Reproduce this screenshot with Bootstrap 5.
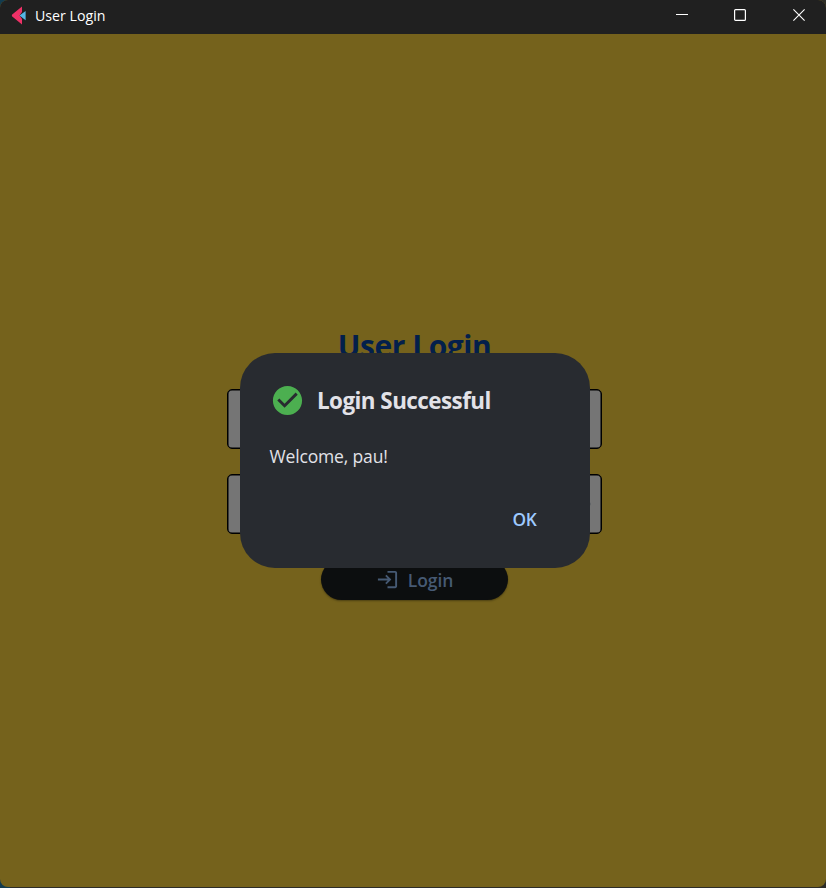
<!DOCTYPE html>
<html lang="en" data-bs-theme="dark">
<head>
<meta charset="utf-8">
<title>User Login</title>
<link href="https://cdn.jsdelivr.net/npm/bootstrap@5.3.0/dist/css/bootstrap.min.css" rel="stylesheet">
<style>
html, body { height: 100%; margin: 0; }
body { background: #2d2d28; font-family: "Segoe UI", "Open Sans", "Noto Sans", sans-serif; overflow: hidden; }
body::before { content: ""; position: absolute; inset: 0 auto 0 0; width: 10px; background: #123b4f; }
.app-window { position: relative; height: 887px; border-radius: 8px; background: #75621c; }
.title-bar { height: 34px; background: #202020; color: #fff; padding: 0 0 4px 11px; }
.title-text { font-size: 14.2px; letter-spacing: 0; margin-left: 9px; padding-top: 1px; }
.win-btn { width: 58.5px; height: 30px; padding: 0; color: #fff; border: 0; }
.win-btns { margin-right: -2px; }
.stage { padding-left: 3px; }
.login-form { width: 375px; gap: 25px; }
.login-title { color: #031f4b; font-size: 30px; font-weight: 700; line-height: 48px; height: 42.5px; letter-spacing: -.45px; margin: 0; }
.login-field { height: 60px; border: 1px solid #000; border-radius: 5px; background: #757575; padding-right: 9px; box-shadow: inset 0 0 0 .5px #000; }
.login-btn { width: 187px; height: 40.5px; border-radius: 21px; background: #0c0e0f; color: #465a74; border: 0; font-size: 17.5px; font-weight: 600; gap: 9px; padding: 0; box-shadow: 0 1px 2px rgba(0,0,0,.35); letter-spacing: -.1px; }
.login-btn span { padding-top: 2px; }
.shade { position: absolute; inset: 34px 0 0 0; padding-left: 3px; }
.dialog-box { width: 350px; height: 215px; border-radius: 35px; background: #282b30; color: #e2e2e8; padding: 30px; }
.dialog-head { height: 35px; gap: 12.5px; }
.dialog-title { color: #e2e2e8; font-size: 22.4px; font-weight: 700; letter-spacing: -.53px; margin: 0; line-height: 34px; padding-top: 1px; }
.dialog-text { font-size: 17.5px; letter-spacing: -.15px; margin: 21px 0 0; line-height: 34px; }
.ok-btn { color: #9ecaff; font-size: 17.3px; font-weight: 600; width: 70px; height: 40px; padding: 0; border: 0; letter-spacing: -.4px; margin-top: 26.5px; }
</style>
<script src="https://cdn.jsdelivr.net/npm/bootstrap@5.3.0/dist/js/bootstrap.bundle.min.js"></script>
</head>
<body>
<div class="app-window d-flex flex-column overflow-hidden">
  <header class="title-bar d-flex align-items-center flex-shrink-0">
    <svg width="15" height="19" viewBox="0 0 15 19"><path d="M11 0.4 1.2 8.6Q.4 9.5 1.2 10.4L11 18.6V13L8.5 9.5 11 6Z" fill="#ee3167"/><path d="M14.6 5v9.2L8.5 9.5Z" fill="#55b5e6"/></svg>
    <span class="title-text flex-grow-1">User Login</span>
    <div class="win-btns d-flex">
      <button class="win-btn btn d-flex align-items-center justify-content-center" aria-label="Minimize"><svg width="12" height="12"><path d="M0 5.500h12" stroke="currentColor"/></svg></button>
      <button class="win-btn btn d-flex align-items-center justify-content-center" aria-label="Maximize"><svg width="12" height="12"><rect x=".6" y=".6" width="10.8" height="10.8" rx="1" fill="none" stroke="currentColor" stroke-width="1.2"/></svg></button>
      <button class="win-btn btn d-flex align-items-center justify-content-center" aria-label="Close"><svg width="12" height="12"><path d="M.4.4 11.6 11.6M11.6.4.4 11.6" stroke="currentColor" stroke-width="1.1"/></svg></button>
    </div>
  </header>
  <main class="stage flex-grow-1 d-flex align-items-center justify-content-center">
    <div class="login-form d-flex flex-column align-items-center">
      <h1 class="login-title">User Login</h1>
      <div class="login-field w-100"></div>
      <div class="login-field w-100 d-flex align-items-center justify-content-end"><svg width="24" height="24" viewBox="0 0 24 24" fill="#5d6165"><path d="M12 4.500C7 4.500 2.730 7.610 1 12c1.730 4.390 6 7.500 11 7.500s9.270-3.110 11-7.500c-1.730-4.390-6-7.500-11-7.500zM12 17a5 5 0 1 1 0-10 5 5 0 0 1 0 10z"/></svg></div>
      <button class="login-btn btn d-flex align-items-center justify-content-center">
        <svg width="23" height="23" viewBox="0 0 24 24" fill="currentColor"><path d="M11 7 9.600 8.400l2.600 2.600H2v2h10.200l-2.600 2.600L11 17l5-5-5-5zm9 12h-8v2h8c1.100 0 2-.9 2-2V5c0-1.100-.9-2-2-2h-8v2h8v14z"/></svg>
        <span>Login</span>
      </button>
    </div>
  </main>
  <div class="shade d-flex align-items-center justify-content-center">
    <section class="dialog-box d-flex flex-column" role="dialog">
      <div class="dialog-head d-flex align-items-center">
        <svg width="35" height="35" viewBox="0 0 24 24" fill="#4caf50"><path d="M12 2C6.480 2 2 6.480 2 12s4.480 10 10 10 10-4.480 10-10S17.520 2 12 2zm-2 15-5-5 1.410-1.410L10 14.170l7.590-7.590L19 8l-9 9z"/></svg>
        <h2 class="dialog-title">Login Successful</h2>
      </div>
      <p class="dialog-text">Welcome, pau!</p>
      <div class="d-flex justify-content-end"><button class="ok-btn btn">OK</button></div>
    </section>
  </div>
</div>
</body>
</html>
